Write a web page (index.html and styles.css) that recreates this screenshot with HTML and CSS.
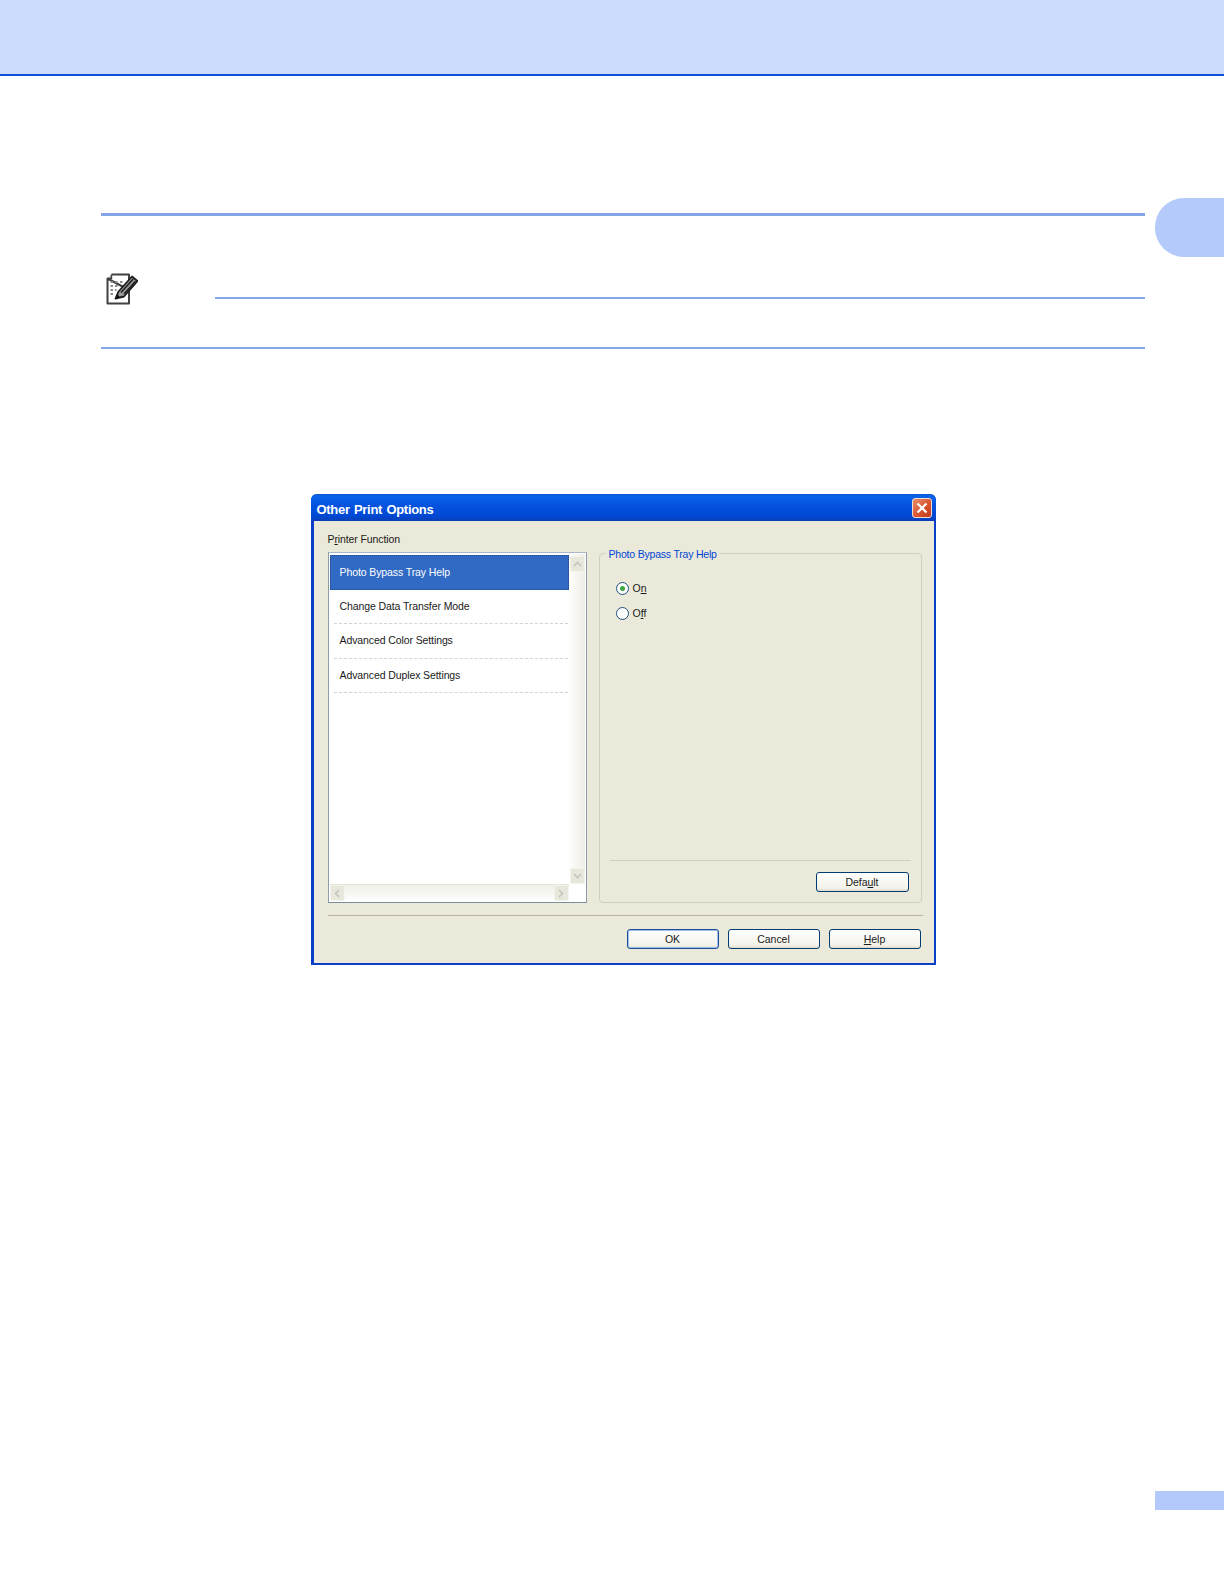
FILE: index.html
```html
<!DOCTYPE html>
<html lang="en">
<head>
<meta charset="utf-8">
<title>Other Print Options</title>
<link rel="stylesheet" href="styles.css">
</head>
<body>
<div class="page">
  <header class="band"></header>
  <div class="chapter-tab"></div>
  <main class="main">
    <div class="rule rule-top"></div>
    <div class="note-head">
      <svg class="note-icon" viewBox="0 0 32 32" width="32" height="32" aria-hidden="true">
        <path d="M5.5 1.5H23V8M23 17V30.5H1.5V5.5Z" fill="#fff" stroke="#404040" stroke-width="2" stroke-linejoin="round"/>
        <path d="M1.5 5.5H5.5V1.5" fill="#b4b4b4" stroke="#404040" stroke-width="1.4"/>
        <path d="M4.5 9h2.5M9 9h2.5M14 9h2.5M4.5 13h2.5M9 13h2.5M4.5 17h2.5M9 17h1.5M4.5 21h2.5" stroke="#8c8c8c" stroke-width="1.8" fill="none"/>
        <path d="M12.5 18.5L26 3.5L31.5 8L18 23.5L9.5 25.5Z" fill="#9a9a9a" stroke="#1c1c1c" stroke-width="1.8" stroke-linejoin="round"/>
        <path d="M15 19.5L27.2 6M18 21L29.5 8.2" stroke="#1c1c1c" stroke-width="1.5" fill="none"/>
        <path d="M9.5 25.5L11 20.5L14 24.5Z" fill="#111"/>
      </svg>
      <div class="note-line"></div>
    </div>
    <div class="rule rule-note"></div>

    <section class="dialog">
      <div class="titlebar">
        <span class="title">Other Print Options</span>
        <span class="close">
          <svg viewBox="0 0 12 12" width="12" height="12" aria-hidden="true"><path d="M1.5 1.5L10.5 10.5M10.5 1.5L1.5 10.5" stroke="#fff" stroke-width="2.2" fill="none"/></svg>
        </span>
      </div>
      <div class="dialog-body">
        <div class="field-label">P<u>r</u>inter Function</div>
        <div class="panes">
          <div class="listbox">
            <div class="list-main">
              <div class="list-items">
                <div class="item selected">Photo Bypass Tray Help</div>
                <div class="item">Change Data Transfer Mode</div>
                <div class="item">Advanced Color Settings</div>
                <div class="item">Advanced Duplex Settings</div>
              </div>
              <div class="vscroll">
                <span class="sbtn"><svg viewBox="0 0 9 6" width="9" height="6"><path d="M1 5L4.5 1.5L8 5" stroke="#c4c4ba" stroke-width="1.6" fill="none"/></svg></span>
                <span class="sbtn"><svg viewBox="0 0 9 6" width="9" height="6"><path d="M1 1L4.5 4.5L8 1" stroke="#c4c4ba" stroke-width="1.6" fill="none"/></svg></span>
              </div>
            </div>
            <div class="hscroll">
              <span class="sbtn"><svg viewBox="0 0 6 9" width="6" height="9"><path d="M5 1L1.5 4.5L5 8" stroke="#c4c4ba" stroke-width="1.6" fill="none"/></svg></span>
              <span class="sbtn"><svg viewBox="0 0 6 9" width="6" height="9"><path d="M1 1L4.5 4.5L1 8" stroke="#c4c4ba" stroke-width="1.6" fill="none"/></svg></span>
            </div>
          </div>
          <div class="group">
            <span class="legend">Photo Bypass Tray Help</span>
            <div class="radios">
              <label class="radio"><span class="dot on"></span><span>O<u>n</u></span></label>
              <label class="radio"><span class="dot"></span><span>O<u>f</u>f</span></label>
            </div>
            <div class="group-foot">
              <button class="btn" type="button">Defa<u>u</u>lt</button>
            </div>
          </div>
        </div>
        <div class="actions">
          <button class="btn primary" type="button">OK</button>
          <button class="btn" type="button">Cancel</button>
          <button class="btn" type="button"><u>H</u>elp</button>
        </div>
      </div>
    </section>
  </main>
  <div class="page-tab"></div>
</div>
</body>
</html>
```

FILE: styles.css
```css
* { box-sizing: border-box; }
html, body { margin: 0; padding: 0; background: #fff; }
.page { position: relative; width: 1224px; height: 1584px; overflow: hidden; font-family: "Liberation Sans", Arial, sans-serif; }
.band { height: 76px; background: #ccdcfc; border-bottom: 2px solid #1050d8; }
.chapter-tab { position: absolute; left: 1155px; top: 198px; width: 69px; height: 59px; background: #b3cafb; border-radius: 29px 0 0 29px; }
.page-tab { position: absolute; left: 1155px; top: 1491px; width: 69px; height: 19px; background: #b3c8fb; }
.main { padding: 137px 79px 0 101px; }
.rule { background: #84a6e8; }
.rule-top { height: 3px; }
.note-head { display: flex; align-items: flex-start; height: 32px; margin-top: 57px; padding-left: 5px; }
.note-icon { flex: none; display: block; }
.note-line { flex: 1; height: 2px; margin: 24px 0 0 77px; background: #84a6e8; }
.rule-note { height: 2px; margin-top: 42px; }

.dialog { width: 625px; height: 471px; margin: 145px auto 0; background: #ebe9d9; border: 2px solid #0a3fc8; border-left-width: 3px; border-top: 0; border-radius: 6px 6px 0 0; display: flex; flex-direction: column; color: #1a1a1a; font-size: 10.5px; }
.titlebar { flex: none; height: 27px; margin: 0 -2px 0 -3px; padding: 3px 4px 0 6px; display: flex; align-items: center; justify-content: space-between; border-radius: 6px 6px 0 0; background: linear-gradient(#0a5ad8 0, #0a62ea 12%, #0454e0 40%, #0048d4 80%, #0a40b8 100%); }
.title { color: #fff; font-weight: bold; font-size: 13px; letter-spacing: -.3px; word-spacing: 1px; }
.close { width: 20px; height: 20px; margin-top: -3px; border: 1px solid #f2dcd4; border-radius: 3px; background: linear-gradient(135deg, #e8906c, #d8502c 60%, #c03c1c); display: flex; align-items: center; justify-content: center; }
.dialog-body { flex: 1; padding: 11px 11px 0 14px; }
.field-label { height: 20px; padding-top: 1px; line-height: 13px; letter-spacing: -.1px; }
.panes { display: grid; grid-template-columns: 259px 323px; column-gap: 12px; height: 351px; }
.listbox { border: 1px solid #8c9ca8; border-bottom-color: #78909c; background: #fff; display: flex; flex-direction: column; border-top-color: #a9b8c8; padding: 1px; }
.list-main { flex: 1; display: flex; min-height: 0; }
.list-items { flex: 1; padding-top: 1px; }
.item { height: 34.5px; margin: 0 1px 0 4px; padding: 0 0 1px 6px; display: flex; align-items: center; border-bottom: 1px dashed #d4d4d4; letter-spacing: -.1px; }
.item.selected { margin: 0; padding-left: 9px; background: #316ac5; color: #fff; border: 1px dotted #26467c; }
.vscroll { flex: none; width: 16px; padding-top: 2px; display: flex; flex-direction: column; align-items: flex-end; justify-content: space-between; background: linear-gradient(90deg, #fefefe, #efeee6); }
.hscroll { flex: none; height: 17px; margin-right: 16px; display: flex; justify-content: space-between; background: linear-gradient(#efeee6, #fefefe); border-top: 1px solid #e6e5da; }
.sbtn { width: 15px; height: 16px; display: flex; align-items: center; justify-content: center; background: #e8e7dc; border: 1px solid #f4f3ec; border-radius: 2px; }
.group { position: relative; margin-top: 1px; border: 1px solid #d0d0bf; border-radius: 4px; padding: 27px 10px 9px 16px; display: flex; flex-direction: column; justify-content: space-between; }
.legend { position: absolute; left: 6px; top: -6px; padding: 0 3px; background: #ebe9d9; color: #0046d5; line-height: 13px; letter-spacing: -.2px; }
.radios { display: flex; flex-direction: column; gap: 11px; }
.radio { display: flex; align-items: center; gap: 4px; height: 14px; }
.dot { width: 13px; height: 13px; border-radius: 50%; border: 1px solid #1c5180; background: #fff; position: relative; }
.dot.on::after { content: ""; position: absolute; left: 3px; top: 3px; width: 5px; height: 5px; border-radius: 50%; background: #3fa63f; }
.group-foot { margin-left: -6px; padding: 11px 1px 0 0; border-top: 1px solid #d0d0bf; display: flex; justify-content: flex-end; }
.group-foot .btn { width: 93px; margin: 0 1px 1px 0; }
.btn { width: 92px; height: 20px; padding: 0; border: 1px solid #003c74; border-radius: 3px; background: linear-gradient(#fff, #f3f2ea 85%, #dcd8c8); font: inherit; color: #1a1a1a; text-align: center; letter-spacing: -.05px; }
.btn.primary { border-color: #1a4f9c; box-shadow: inset 0 0 0 1px #a4bee8; }
.actions { margin-top: 12px; padding-top: 13px; border-top: 1px solid #b8b5a2; display: flex; justify-content: flex-end; gap: 9px; padding-right: 2px; }
```
